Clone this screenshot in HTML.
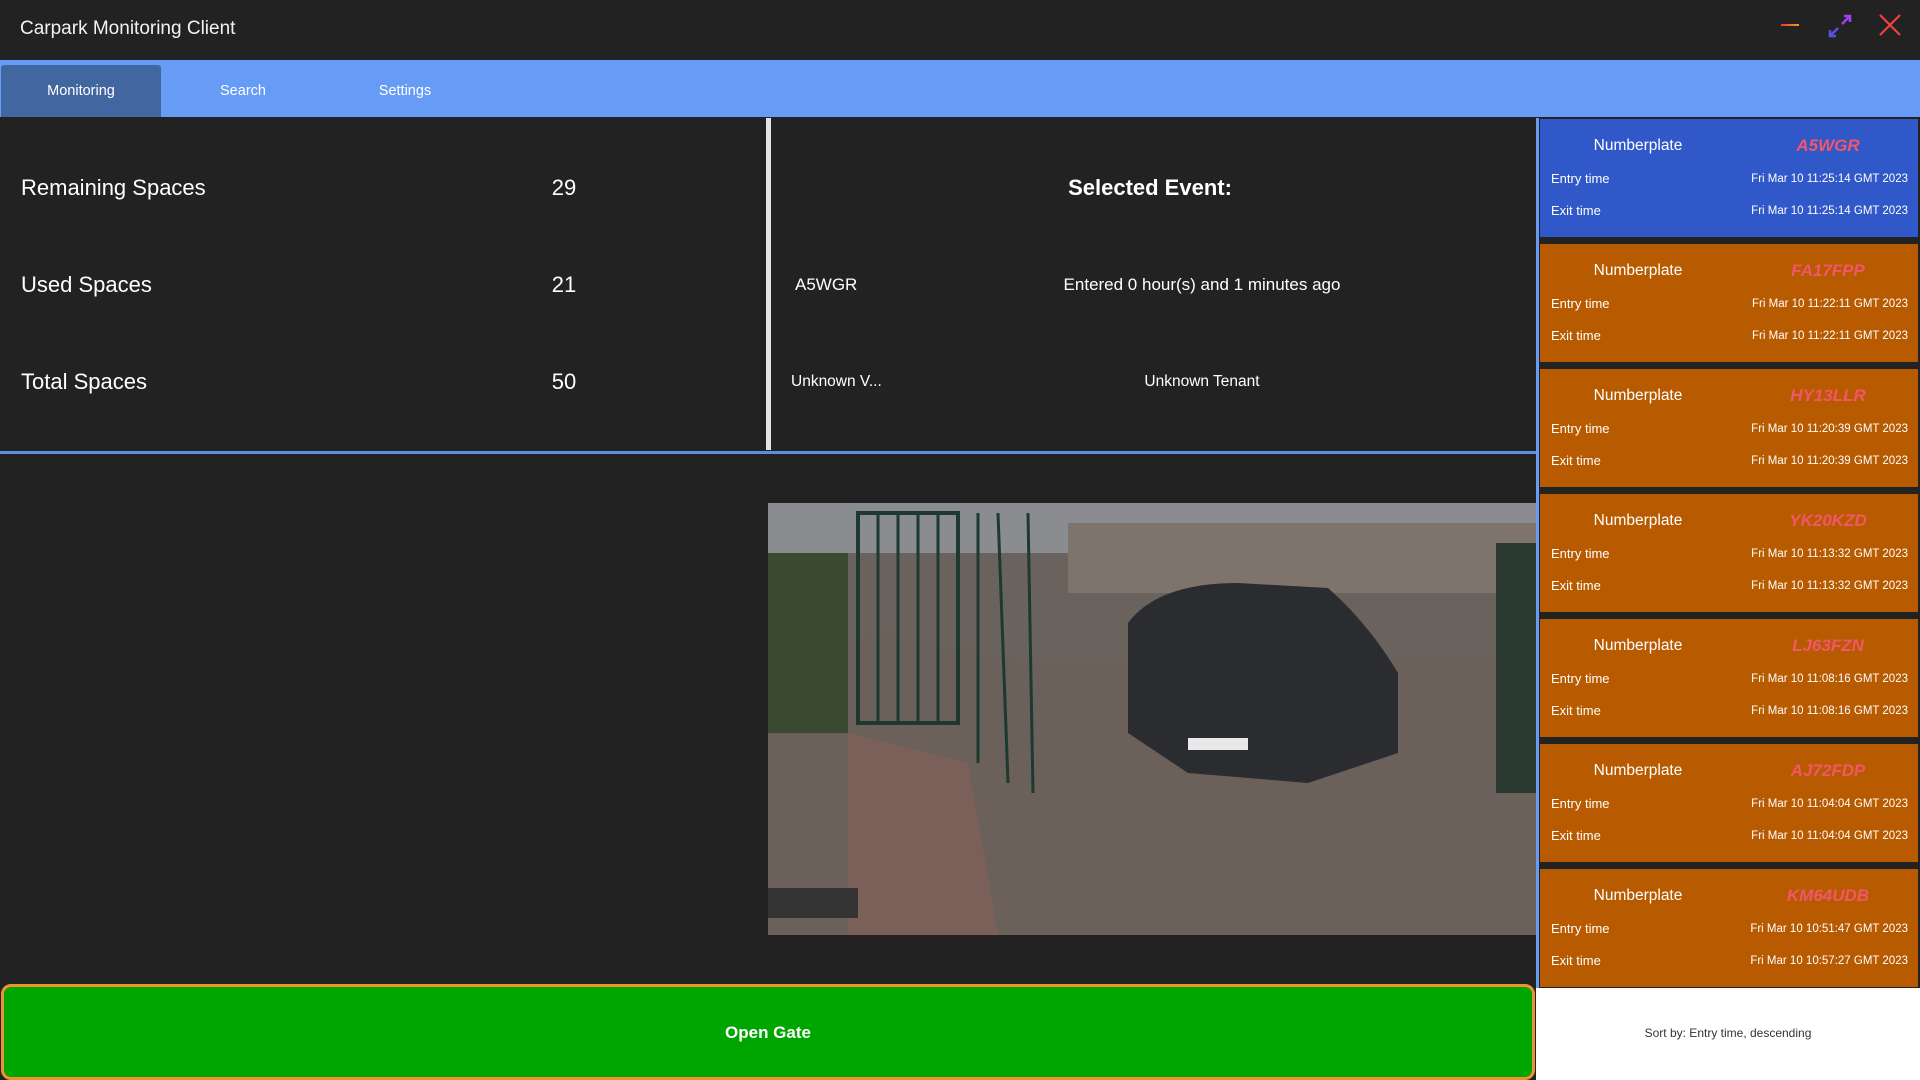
<!DOCTYPE html>
<html><head><meta charset="utf-8"><style>
*{margin:0;padding:0;box-sizing:border-box}
body{width:1920px;height:1080px;background:#222;font-family:"Liberation Sans","DejaVu Sans",sans-serif;color:#fff;position:relative;overflow:hidden}
.a{position:absolute;white-space:nowrap}
.card{position:absolute;left:1540px;width:378px;height:118px;background:#b85a00}
.card .np{position:absolute;left:0;width:196px;text-align:center;top:18px;font-size:15.5px}
.card .pl{position:absolute;left:200px;width:176px;text-align:center;top:17px;font-size:17px;font-weight:bold;font-style:italic;color:#f2566a}
.card .l{position:absolute;left:11px;font-size:13px}
.card .r{position:absolute;right:10px;font-size:11.5px}
</style></head><body>
<div class="a" style="left:20px;top:18px;font-size:19px;color:#f2f2f2">Carpark Monitoring Client</div>
<div class="a" style="left:1781px;top:24px;width:18px;height:2px;background:linear-gradient(90deg,#e83a2a,#f59a20)"></div>
<svg class="a" style="left:1828px;top:14px" width="24" height="24" viewBox="0 0 24 24"><path d="M22 2L14 10M16 2H22V8" stroke="#a040f0" stroke-width="2.5" fill="none"/><path d="M2 22L10 14M2 16V22H8" stroke="#5a50e0" stroke-width="2.5" fill="none"/></svg>
<svg class="a" style="left:1879px;top:14px" width="22" height="22"><path d="M1 1L21 21M21 1L1 21" stroke="#f04040" stroke-width="2.2"/></svg>
<div class="a" style="left:0;top:60px;width:1920px;height:57px;background:#669cf5"></div>
<div class="a" style="left:1px;top:65px;width:160px;height:52px;background:#4266a0;border-radius:3px 3px 0 0"></div>
<div class="a" style="left:1px;top:83px;width:160px;text-align:center;font-size:14.5px">Monitoring</div>
<div class="a" style="left:163px;top:83px;width:160px;text-align:center;font-size:14.5px">Search</div>
<div class="a" style="left:325px;top:83px;width:160px;text-align:center;font-size:14.5px">Settings</div>

<div class="a" style="left:21px;top:175px;font-size:22px">Remaining Spaces</div>
<div class="a" style="left:540px;top:175px;width:48px;text-align:center;font-size:22px">29</div>
<div class="a" style="left:21px;top:272px;font-size:22px">Used Spaces</div>
<div class="a" style="left:540px;top:272px;width:48px;text-align:center;font-size:22px">21</div>
<div class="a" style="left:21px;top:369px;font-size:22px">Total Spaces</div>
<div class="a" style="left:540px;top:369px;width:48px;text-align:center;font-size:22px">50</div>
<div class="a" style="left:766px;top:118px;width:5px;height:332px;background:#e4e4e4"></div>
<div class="a" style="left:0;top:451px;width:1536px;height:3px;background:#5b8fe0"></div>
<div class="a" style="left:770px;top:175px;width:760px;text-align:center;font-size:22px;font-weight:bold">Selected Event:</div>
<div class="a" style="left:795px;top:275px;font-size:17px">A5WGR</div>
<div class="a" style="left:980px;top:275px;width:444px;text-align:center;font-size:17px">Entered 0 hour(s) and 1 minutes ago</div>
<div class="a" style="left:791px;top:373px;font-size:15.5px">Unknown V...</div>
<div class="a" style="left:1080px;top:373px;width:244px;text-align:center;font-size:15.5px">Unknown Tenant</div>

<svg class="a" style="left:768px;top:503px" width="768" height="432" viewBox="0 0 768 432">
<rect width="768" height="432" fill="#6a625c"/>
<rect y="0" width="768" height="50" fill="#8a8c90"/>
<rect x="300" y="20" width="468" height="70" fill="#7e746c"/>
<polygon points="0,150 120,130 260,160 768,150 768,432 0,432" fill="#6c605a"/>
<polygon points="80,230 200,260 230,432 80,432" fill="#7a6058"/>
<rect x="0" y="50" width="80" height="180" fill="#3a4a30"/>
<rect x="90" y="10" width="100" height="210" fill="none" stroke="#1e3a30" stroke-width="4"/>
<g stroke="#1e3a30" stroke-width="3"><line x1="110" y1="10" x2="110" y2="220"/><line x1="130" y1="10" x2="130" y2="220"/><line x1="150" y1="10" x2="150" y2="220"/><line x1="170" y1="10" x2="170" y2="220"/><line x1="210" y1="10" x2="210" y2="260"/><line x1="230" y1="10" x2="240" y2="280"/><line x1="260" y1="10" x2="265" y2="290"/></g>
<rect x="728" y="40" width="40" height="250" fill="#2a3a30"/>
<path d="M360 120 Q390 80 470 80 L560 85 Q600 120 630 170 L630 250 L540 280 L420 270 L360 230 Z" fill="#2a2c30"/>
<rect x="420" y="235" width="60" height="12" fill="#e8e8e8"/>
<rect y="385" x="0" width="90" height="30" fill="#333"/>
</svg>

<div class="a" style="left:1px;top:984px;width:1534px;height:96px;background:#00a600;border:3px solid #f09030;border-radius:10px"></div>
<div class="a" style="left:0;top:1023px;width:1536px;text-align:center;font-size:17px;font-weight:bold">Open Gate</div>

<div class="a" style="left:1536px;top:118px;width:3px;height:870px;background:#669cf5"></div>
<div class="card" style="top:119px;background:#3058c8"><div class="np">Numberplate</div><div class="pl">A5WGR</div><div class="l" style="top:52px">Entry time</div><div class="r" style="top:54px">Fri Mar 10 11:25:14 GMT 2023</div><div class="l" style="top:84px">Exit time</div><div class="r" style="top:86px">Fri Mar 10 11:25:14 GMT 2023</div></div>
<div class="card" style="top:244px"><div class="np">Numberplate</div><div class="pl">FA17FPP</div><div class="l" style="top:52px">Entry time</div><div class="r" style="top:54px">Fri Mar 10 11:22:11 GMT 2023</div><div class="l" style="top:84px">Exit time</div><div class="r" style="top:86px">Fri Mar 10 11:22:11 GMT 2023</div></div>
<div class="card" style="top:369px"><div class="np">Numberplate</div><div class="pl">HY13LLR</div><div class="l" style="top:52px">Entry time</div><div class="r" style="top:54px">Fri Mar 10 11:20:39 GMT 2023</div><div class="l" style="top:84px">Exit time</div><div class="r" style="top:86px">Fri Mar 10 11:20:39 GMT 2023</div></div>
<div class="card" style="top:494px"><div class="np">Numberplate</div><div class="pl">YK20KZD</div><div class="l" style="top:52px">Entry time</div><div class="r" style="top:54px">Fri Mar 10 11:13:32 GMT 2023</div><div class="l" style="top:84px">Exit time</div><div class="r" style="top:86px">Fri Mar 10 11:13:32 GMT 2023</div></div>
<div class="card" style="top:619px"><div class="np">Numberplate</div><div class="pl">LJ63FZN</div><div class="l" style="top:52px">Entry time</div><div class="r" style="top:54px">Fri Mar 10 11:08:16 GMT 2023</div><div class="l" style="top:84px">Exit time</div><div class="r" style="top:86px">Fri Mar 10 11:08:16 GMT 2023</div></div>
<div class="card" style="top:744px"><div class="np">Numberplate</div><div class="pl">AJ72FDP</div><div class="l" style="top:52px">Entry time</div><div class="r" style="top:54px">Fri Mar 10 11:04:04 GMT 2023</div><div class="l" style="top:84px">Exit time</div><div class="r" style="top:86px">Fri Mar 10 11:04:04 GMT 2023</div></div>
<div class="card" style="top:869px"><div class="np">Numberplate</div><div class="pl">KM64UDB</div><div class="l" style="top:52px">Entry time</div><div class="r" style="top:54px">Fri Mar 10 10:51:47 GMT 2023</div><div class="l" style="top:84px">Exit time</div><div class="r" style="top:86px">Fri Mar 10 10:57:27 GMT 2023</div></div>
<div class="a" style="left:1536px;top:988px;width:384px;height:92px;background:#fff"></div>
<div class="a" style="left:1536px;top:1026px;width:384px;text-align:center;font-size:12px;color:#333">Sort by: Entry time, descending</div>
</body></html>
